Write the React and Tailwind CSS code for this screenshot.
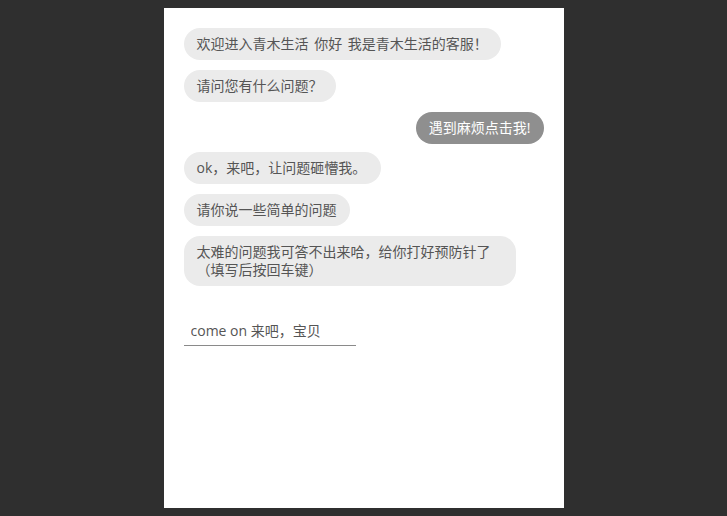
import React from "react";

const font = { fontFamily: '"Open Sans", "Noto Sans CJK SC", sans-serif' };

function Bubble({ children, className = "" }) {
  return (
    <div
      className={`rounded-[16px] bg-[#ebebeb] px-[13px] py-[7px] text-[14px] leading-[18px] text-[#555555] max-w-[332px] ${className}`}
    >
      {children}
    </div>
  );
}

export default function App() {
  return (
    <div className="min-h-[516px] w-full bg-[#2f2f2f] pt-[8px]" style={font}>
      <div className="mx-auto flex h-[500px] w-[400px] flex-col items-start bg-white px-[20px] pt-[20px]">
        <Bubble className="[word-spacing:2px]">欢迎进入青木生活 你好 我是青木生活的客服！</Bubble>
        <Bubble className="mt-[10px]">请问您有什么问题？</Bubble>
        <div className="mt-[10px] self-end rounded-[16px] bg-[#8f8f8f] px-[13px] py-[7px] text-[14px] leading-[18px] text-white">
          遇到麻烦点击我!
        </div>
        <Bubble className="mt-[8px] pr-[15px]">ok，来吧，让问题砸懵我。</Bubble>
        <Bubble className="mt-[10px]">请你说一些简单的问题</Bubble>
        <Bubble className="mt-[10px]">太难的问题我可答不出来哈，给你打好预防针了（填写后按回车键）</Bubble>
        <input
          className="mt-[29px] h-[31px] w-[172px] border-b border-[#8a8a8a] bg-transparent pl-[7px] text-[14px] text-[#555555] outline-none placeholder:text-[#555555]"
          style={font}
          placeholder="come on 来吧，宝贝"
        />
      </div>
    </div>
  );
}
